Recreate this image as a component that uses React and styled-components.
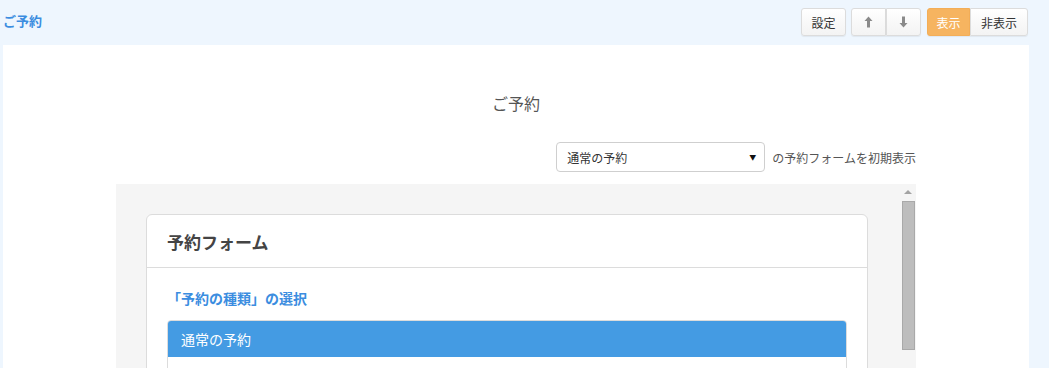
import React from 'react'
import styled, { createGlobalStyle } from 'styled-components'

const Global = createGlobalStyle`
  html, body {
    margin: 0;
    padding: 0;
    background: #eef6fe;
    font-family: "Noto Sans CJK JP", "Noto Sans", "Liberation Sans", sans-serif;
    color: #333;
    overflow: hidden;
  }
`

const Page = styled.div`
  width: 1049px;
  height: 368px;
  display: flex;
  flex-direction: column;
`

const Header = styled.div`
  height: 45px;
  display: flex;
  align-items: center;
  justify-content: space-between;
  padding: 0 21px 0 3px;
  box-sizing: border-box;
`

const Title = styled.div`
  color: #3b8de0;
  font-weight: 700;
  font-size: 13px;
  margin-top: -5px;
`

const Tools = styled.div`
  display: flex;
  align-items: center;
  gap: 5px;
  margin-top: -1px;
`

const Group = styled.div`
  display: flex;
  margin-left: ${p => p.extra || 0}px;
  & > * + * {
    border-left: none;
  }
  & > *:not(:first-child) {
    border-top-left-radius: 0;
    border-bottom-left-radius: 0;
  }
  & > *:not(:last-child) {
    border-top-right-radius: 0;
    border-bottom-right-radius: 0;
  }
`

const Btn = styled.button`
  height: 28px;
  width: ${p => p.w}px;
  box-sizing: border-box;
  border: 1px solid ${p => (p.active ? '#f3ae58' : '#dcdcdc')};
  border-radius: 3px;
  background: ${p => (p.active ? '#f6b460' : 'linear-gradient(#ffffff, #f3f3f3)')};
  color: ${p => (p.active ? '#fff' : '#333')};
  font-family: inherit;
  font-size: 12px;
  padding: 0;
  display: flex;
  align-items: center;
  justify-content: center;
  box-shadow: 0 1px 1px rgba(0, 0, 0, 0.06);
`

const Panel = styled.div`
  flex: 1;
  background: #fff;
  margin: 0 20px 0 3px;
  display: flex;
  flex-direction: column;
  align-items: center;
  overflow: hidden;
`

const Heading = styled.div`
  margin-top: 47px;
  font-size: 16px;
  color: #555;
  line-height: 22px;
`

const Inner = styled.div`
  width: 800px;
  display: flex;
  flex-direction: column;
`

const SelectRow = styled.div`
  display: flex;
  justify-content: flex-end;
  align-items: center;
  gap: 7px;
  margin-top: 28px;
  font-size: 12px;
  color: #555;
`

const Select = styled.div`
  width: 209px;
  height: 30px;
  box-sizing: border-box;
  border: 1px solid #cfcfcf;
  border-radius: 4px;
  display: flex;
  align-items: center;
  justify-content: space-between;
  padding: 0 8px 0 10px;
  font-size: 12px;
  color: #333;
`

const Caret = styled.span`
  font-size: 7px;
  color: #111;
`

const Frame = styled.div`
  margin-top: 12px;
  height: 200px;
  background: #f5f5f5;
  display: flex;
`

const FrameBody = styled.div`
  flex: 1;
  padding: 30px 32px 0 30px;
`

const Scroll = styled.div`
  width: 16px;
  display: flex;
  flex-direction: column;
  align-items: center;
  padding-top: 6px;
`

const ScrollArrow = styled.div`
  width: 0;
  height: 0;
  border-left: 4px solid transparent;
  border-right: 4px solid transparent;
  border-bottom: 4px solid #a3a3a3;
`

const Thumb = styled.div`
  margin-top: 7px;
  width: 13px;
  height: 149px;
  box-sizing: border-box;
  background: #bdbdbd;
  border: 1px solid #a9a9a9;
`

const Card = styled.div`
  background: #fff;
  border: 1px solid #dcdcdc;
  border-radius: 6px;
  height: 240px;
`

const CardHead = styled.div`
  height: 52px;
  border-bottom: 1px solid #dcdcdc;
  display: flex;
  align-items: center;
  padding-left: 20px;
  font-size: 17px;
  font-weight: 700;
  color: #444;
`

const CardBody = styled.div`
  padding: 20px 20px 0 20px;
`

const SubTitle = styled.div`
  color: #3b8de0;
  font-weight: 700;
  font-size: 14px;
  line-height: 20px;
`

const Option = styled.div`
  margin-top: 12px;
  border: 1px solid #dcdcdc;
  border-radius: 4px;
  height: 80px;
  overflow: hidden;
`

const OptionHead = styled.div`
  height: 36px;
  background: #449be3;
  color: #fff;
  font-size: 14px;
  display: flex;
  align-items: center;
  padding-left: 13px;
`

const Arrow = ({ down }) => (
  <svg width="9" height="12" viewBox="0 0 9 12" style={{ transform: down ? 'rotate(180deg)' : 'none' }}>
    <path d="M4.5 0.5 L8.5 5 L6 5 L6 11.5 L3 11.5 L3 5 L0.5 5 Z" fill="#8a8a8a" />
  </svg>
)

export default function App() {
  return (
    <Page>
      <Global />
      <Header>
        <Title>ご予約</Title>
        <Tools>
          <Btn w={45}>設定</Btn>
          <Group>
            <Btn w={35}><Arrow /></Btn>
            <Btn w={35}><Arrow down /></Btn>
          </Group>
          <Group extra={1}>
            <Btn w={43} active>表示</Btn>
            <Btn w={58}>非表示</Btn>
          </Group>
        </Tools>
      </Header>
      <Panel>
        <Heading>ご予約</Heading>
        <Inner>
          <SelectRow>
            <Select>
              <span>通常の予約</span>
              <Caret>▼</Caret>
            </Select>
            <span>の予約フォームを初期表示</span>
          </SelectRow>
          <Frame>
            <FrameBody>
              <Card>
                <CardHead>予約フォーム</CardHead>
                <CardBody>
                  <SubTitle>「予約の種類」の選択</SubTitle>
                  <Option>
                    <OptionHead>通常の予約</OptionHead>
                  </Option>
                </CardBody>
              </Card>
            </FrameBody>
            <Scroll>
              <ScrollArrow />
              <Thumb />
            </Scroll>
          </Frame>
        </Inner>
      </Panel>
    </Page>
  )
}
